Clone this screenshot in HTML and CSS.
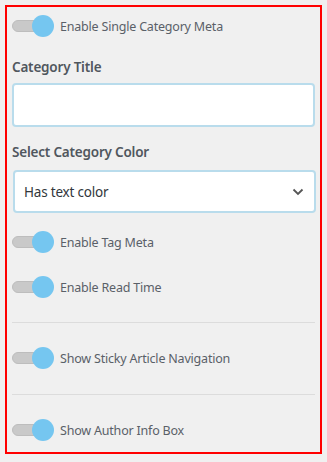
FILE: index.html
```html
<!DOCTYPE html>
<html>
<head>
    <title>Single Post Options</title>
    <link rel="stylesheet" href="styles.css">
</head>
<body>
    <div class="panel">
        <div class="toggle-row first">
            <span class="toggle"><span class="knob"></span></span>
            <span class="toggle-label">Enable Single Category Meta</span>
        </div>

        <div class="field-label">Category Title</div>
        <input class="text-input" type="text">

        <div class="field-label second">Select Category Color</div>
        <div class="select-box">
            <span>Has text color</span>
            <svg class="chevron" width="12" height="8" viewBox="0 0 12 8"><path d="M1.5 1.5 L6 6 L10.5 1.5" fill="none" stroke="#555" stroke-width="1.8"/></svg>
        </div>

        <div class="toggle-row tag">
            <span class="toggle"><span class="knob"></span></span>
            <span class="toggle-label">Enable Tag Meta</span>
        </div>

        <div class="toggle-row read">
            <span class="toggle"><span class="knob"></span></span>
            <span class="toggle-label">Enable Read Time</span>
        </div>

        <div class="divider"></div>

        <div class="toggle-row boxed">
            <span class="toggle"><span class="knob"></span></span>
            <span class="toggle-label">Show Sticky Article Navigation</span>
        </div>

        <div class="divider"></div>

        <div class="toggle-row boxed">
            <span class="toggle"><span class="knob"></span></span>
            <span class="toggle-label">Show Author Info Box</span>
        </div>
    </div>
</body>
</html>
```

FILE: styles.css
```css
html, body { margin: 0; padding: 0; background: #f0f0f0; }
body { padding: 5px; font-family: "Noto Sans", "Open Sans", sans-serif; }

.panel {
    width: 317px; height: 449px; box-sizing: border-box;
    border: 2px solid #ff0000;
    padding: 0 5px 0 5px;
    display: flex; flex-direction: column;
}

.toggle-row { display: flex; align-items: center; height: 22px; }
.toggle-row.first { margin-top: 8px; }
.toggle-row.tag { margin-top: 18px; }
.toggle-row.read { margin-top: 23px; }
.toggle-row.boxed { margin-top: 24px; margin-bottom: 25px; }

.toggle {
    position: relative; width: 42px; height: 22px; flex: none;
}
.toggle::before {
    content: ""; position: absolute; left: 0; top: 5px;
    width: 32px; height: 12px; box-sizing: border-box;
    background: #c9c9c9; border: 1px solid #bdbdbd; border-radius: 7px;
}
.knob {
    position: absolute; right: 0; top: 0;
    width: 22px; height: 22px; border-radius: 50%;
    background: #75c6f0;
}
.toggle-label {
    margin-left: 6px; font-size: 12.5px; color: #5a6068; letter-spacing: -0.2px;
}

.field-label {
    margin-top: 22px; font-size: 13.5px; font-weight: 600; color: #50575e;
    line-height: 16px; letter-spacing: -0.2px;
}
.field-label.second { margin-top: 17px; }

.text-input {
    margin-top: 8px; width: 303px; height: 44px; box-sizing: border-box;
    border: 2px solid #b9dcec; border-radius: 4px; background: #fff;
    outline: none; padding: 0;
}

.select-box {
    margin-top: 10px; margin-left: 1px; width: 303px; height: 43px; box-sizing: border-box;
    border: 2px solid #b9dcec; border-radius: 4px; background: #fff;
    display: flex; align-items: center; justify-content: space-between;
    padding: 0 10px 0 9px;
    font-size: 13.5px; color: #32373c; letter-spacing: -0.2px;
}
.chevron { display: block; }

.divider { height: 1px; background: #dcdcdc; }
.toggle-row.read + .divider { margin-top: 24px; }
.panel > .toggle-row.boxed:last-child { margin-bottom: 0; }
```
